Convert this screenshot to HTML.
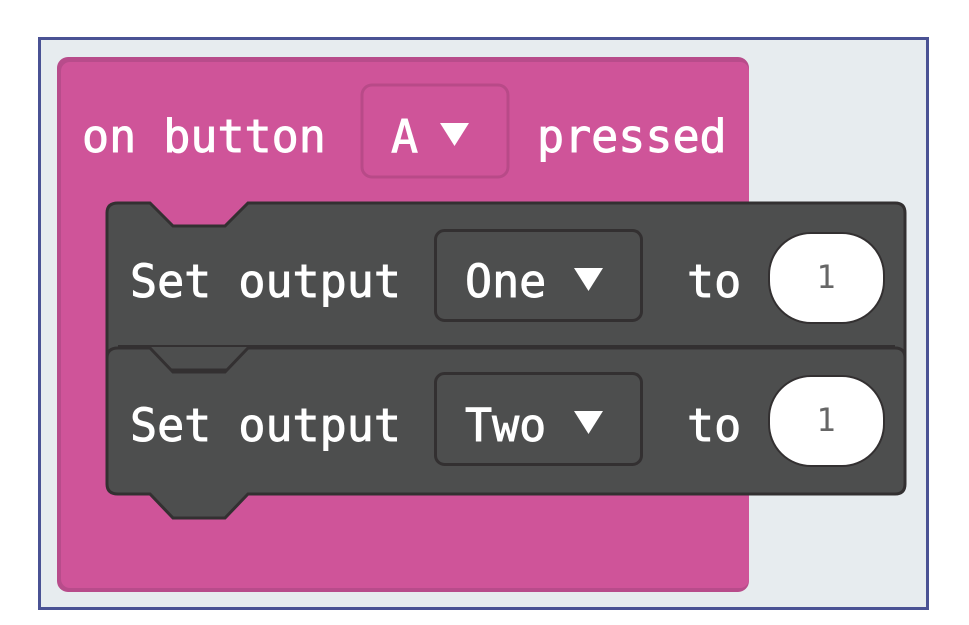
<!DOCTYPE html>
<html><head><meta charset="utf-8"><style>
html,body{margin:0;padding:0;background:#fff;width:969px;height:625px;overflow:hidden}
text{font-family:"DejaVu Sans Mono","Liberation Mono",monospace;}
.w{fill:#fff;stroke:#fff;stroke-width:0.9px}
</style></head><body>
<svg width="969" height="625" viewBox="0 0 969 625" xmlns="http://www.w3.org/2000/svg">
<rect x="39.5" y="38.5" width="888" height="570" fill="#e7ecef" stroke="#4a5294" stroke-width="3"/>
<rect x="57" y="57" width="692" height="535" rx="11" fill="#b84c8b"/>
<rect x="61" y="62" width="688" height="526" rx="9" fill="#cf5499"/>
<text x="82" y="152" font-size="45" class="w">on button</text>
<rect x="362" y="85" width="146" height="92" rx="10" fill="none" stroke="#b84a88" stroke-width="3"/>
<text x="391" y="152" font-size="45" class="w">A</text>
<path d="M440 123 L469 123 L454.5 146 Z" fill="#fff"/>
<text x="537" y="152" font-size="45" class="w">pressed</text>
<!-- block 1 -->
<path d="M118 203 H150 L173 226 H225 L248 203 H895 Q905 203 905 213 V370 H107 V213 Q107 203 118 203 Z" fill="#4d4e4e" stroke="#333031" stroke-width="3"/>
<text x="130" y="297" font-size="45" class="w">Set output</text>
<rect x="435.5" y="230.5" width="206" height="90" rx="9" fill="none" stroke="#333031" stroke-width="3"/>
<text x="465" y="297" font-size="45" class="w">One</text>
<path d="M574 268 L603 268 L588.5 291 Z" fill="#fff"/>
<text x="687" y="297" font-size="45" class="w">to</text>
<rect x="769" y="233" width="115" height="90" rx="42" fill="#fff" stroke="#333031" stroke-width="2"/>
<text x="826" y="288" font-size="32" fill="#666" text-anchor="middle">1</text>
<!-- block 2 -->
<path d="M118 348 H150 L173 372 H225 L248 348 H895 Q905 348 905 358 V484 Q905 494 895 494 H248 L225 518 H173 L150 494 H118 Q107 494 107 484 V358 Q107 348 118 348 Z" fill="#4d4e4e" stroke="#333031" stroke-width="3"/>
<path d="M118 346 H895" stroke="#333031" stroke-width="2"/>
<text x="130" y="441" font-size="45" class="w">Set output</text>
<rect x="435.5" y="373.5" width="206" height="91" rx="9" fill="none" stroke="#333031" stroke-width="3"/>
<text x="465" y="441" font-size="45" class="w">Two</text>
<path d="M574 411 L603 411 L588.5 434 Z" fill="#fff"/>
<text x="687" y="441" font-size="45" class="w">to</text>
<rect x="769" y="376" width="115" height="90" rx="42" fill="#fff" stroke="#333031" stroke-width="2"/>
<text x="826" y="431" font-size="32" fill="#666" text-anchor="middle">1</text>
</svg>
</body></html>
